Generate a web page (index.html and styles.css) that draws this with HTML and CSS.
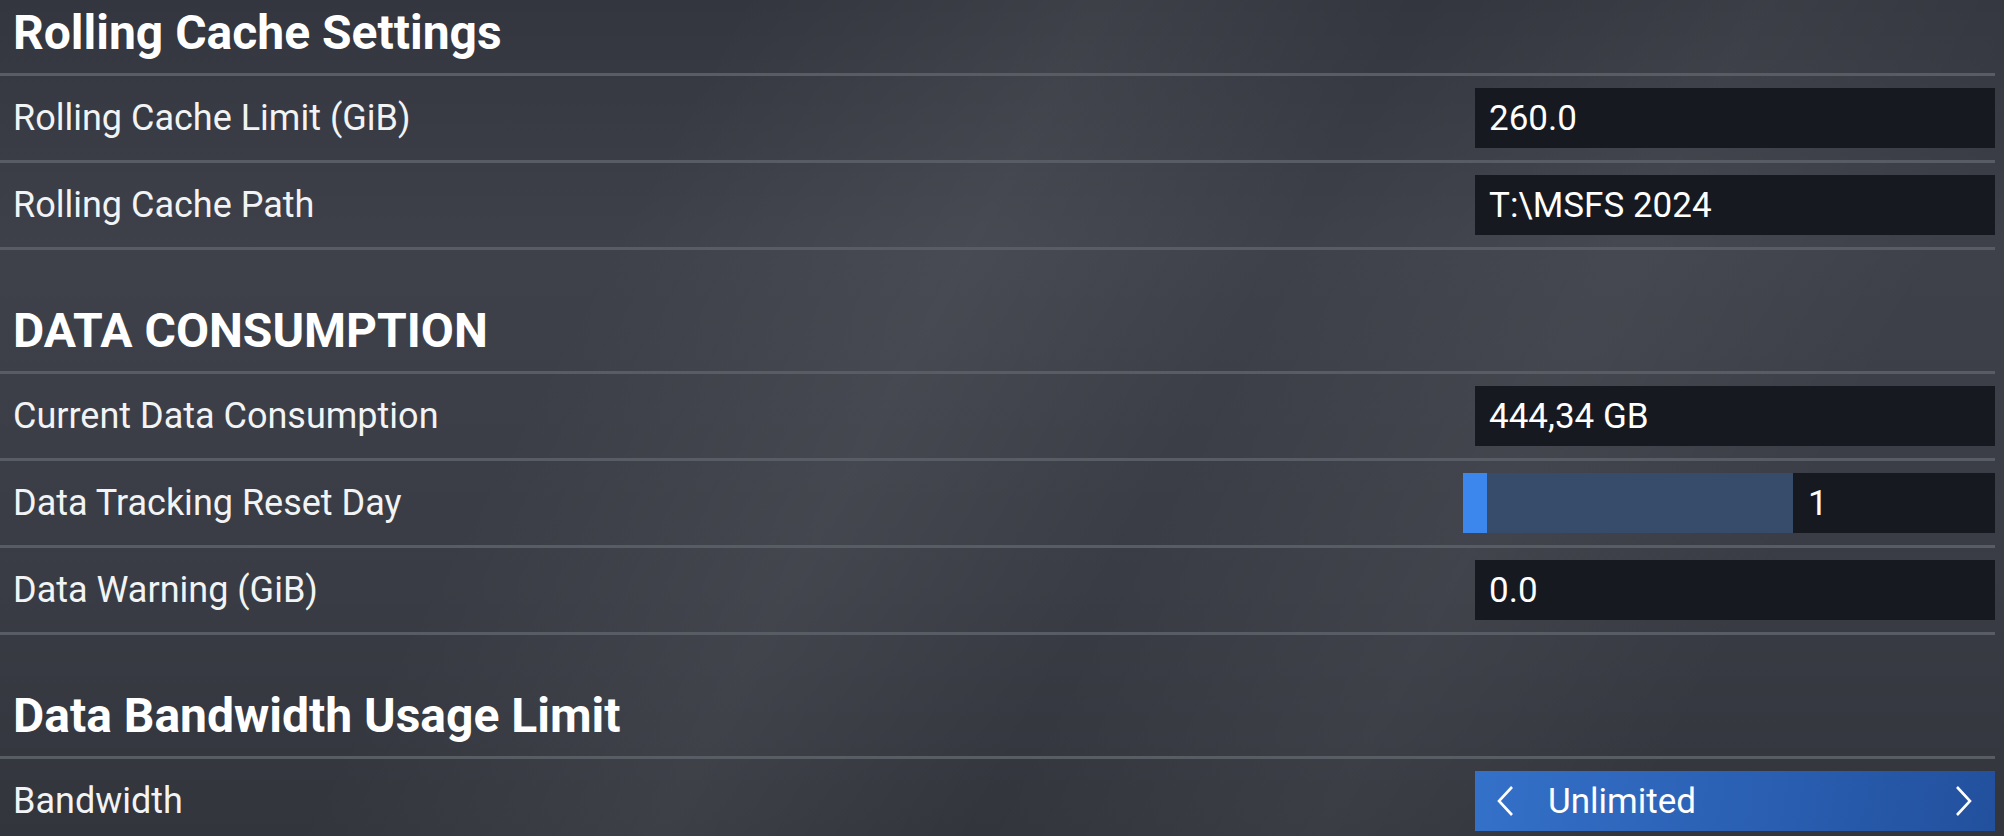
FILE: index.html
```html
<!DOCTYPE html>
<html>
<head>
    <meta charset="UTF-8">
    <title>Data Settings</title>
    <link rel="stylesheet" href="styles.css">
</head>
<body>
    <div class="settings">
        <h2 class="section-title">Rolling Cache Settings</h2>
        <div class="row">
            <span class="label">Rolling Cache Limit (GiB)</span>
            <div class="field">260.0</div>
        </div>
        <div class="row">
            <span class="label">Rolling Cache Path</span>
            <div class="field">T:\MSFS 2024</div>
        </div>

        <h2 class="section-title">DATA CONSUMPTION</h2>
        <div class="row">
            <span class="label">Current Data Consumption</span>
            <div class="field">444,34 GB</div>
        </div>
        <div class="row">
            <span class="label">Data Tracking Reset Day</span>
            <div class="slider">
                <div class="slider-track">
                    <div class="slider-thumb"></div>
                </div>
                <div class="slider-value">1</div>
            </div>
        </div>
        <div class="row">
            <span class="label">Data Warning (GiB)</span>
            <div class="field">0.0</div>
        </div>

        <h2 class="section-title">Data Bandwidth Usage Limit</h2>
        <div class="row">
            <span class="label">Bandwidth</span>
            <div class="selector">
                <svg class="chevron" width="22" height="32" viewBox="0 0 22 32"><path d="M18 2 L5 16 L18 30" fill="none" stroke="#fff" stroke-width="2.6"/></svg>
                <span class="selector-text">Unlimited</span>
                <svg class="chevron chevron-right" width="22" height="32" viewBox="0 0 22 32"><path d="M4 2 L17 16 L4 30" fill="none" stroke="#fff" stroke-width="2.6"/></svg>
            </div>
        </div>
    </div>
</body>
</html>
```

FILE: styles.css
```css
html, body {
    height: 100%;
}
body {
    margin: 0;
    overflow: hidden;
    color: #f2f3f5;
    font-family: Roboto, "Liberation Sans", sans-serif;
    background-color: #3a3d45;
    background-image:
        linear-gradient(118deg, rgba(255,255,255,0) 30%, rgba(255,255,255,0.05) 45%, rgba(255,255,255,0) 58%, rgba(255,255,255,0.04) 72%, rgba(255,255,255,0) 85%),
        linear-gradient(180deg, #33363e 0%, #3e414a 30%, #393c44 70%, #32353c 100%);
}
.settings {
    margin-top: -48px;
    margin-right: 9px;
}
.section-title {
    margin: 0;
    height: 124px;
    padding: 0 0 16px 13px;
    box-sizing: border-box;
    display: flex;
    align-items: flex-end;
    font-size: 48px;
    line-height: 48px;
    font-weight: 700;
    color: #fff;
    border-bottom: 3px solid #585c64;
}
.row {
    display: flex;
    justify-content: space-between;
    align-items: center;
    padding: 12px 0;
    border-bottom: 3px solid #585c64;
}
.label {
    padding-left: 13px;
    font-size: 36px;
}
.field {
    width: 520px;
    height: 60px;
    box-sizing: border-box;
    padding-left: 14px;
    display: flex;
    align-items: center;
    background-color: #161920;
    font-size: 35px;
    color: #fff;
}
.slider {
    width: 532px;
    height: 60px;
    display: flex;
}
.slider-track {
    width: 330px;
    background-color: #374c6b;
}
.slider-thumb {
    width: 24px;
    height: 100%;
    background-color: #3c87ee;
}
.slider-value {
    flex: 1;
    padding-left: 15px;
    display: flex;
    align-items: center;
    background-color: #161920;
    font-size: 35px;
    color: #fff;
}
.selector {
    width: 520px;
    height: 60px;
    box-sizing: border-box;
    padding: 0 20px 0 19px;
    display: flex;
    align-items: center;
    background: linear-gradient(100deg, #3471c9 0%, #2a5fb2 55%, #22509d 100%);
    font-size: 35px;
    color: #fff;
}
.selector-text {
    flex: 1;
    margin-left: 32px;
}
```
